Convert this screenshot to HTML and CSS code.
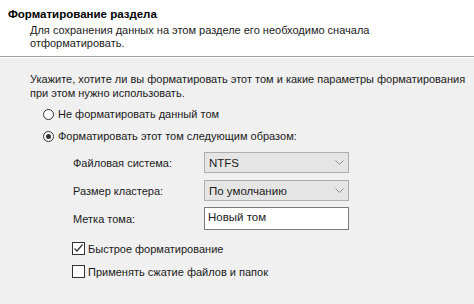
FILE: index.html
```html
<!DOCTYPE html>
<html lang="ru">
<head>
  <meta charset="UTF-8" />
  <title>Форматирование раздела</title>
  <link rel="stylesheet" href="styles.css">
</head>
<body>
  <div class="header">
    <div class="header-title">Форматирование раздела</div>
    <div class="header-desc">Для сохранения данных на этом разделе его необходимо сначала<br>отформатировать.</div>
  </div>

  <div class="content">
    <p class="intro">Укажите, хотите ли вы форматировать этот том и какие параметры форматирования<br>при этом нужно использовать.</p>

    <div class="radio-row">
      <span class="radio"></span>
      <span>Не форматировать данный том</span>
    </div>
    <div class="radio-row">
      <span class="radio checked"></span>
      <span>Форматировать этот том следующим образом:</span>
    </div>

    <div class="options">
      <div class="field">
        <span class="field-label">Файловая система:</span>
        <div class="combo">
          <span>NTFS</span>
          <svg class="chevron" width="9" height="5" viewBox="0 0 9 5"><path d="M0.5 0.5 L4.5 4.5 L8.5 0.5" fill="none" stroke="#8a8a8a" stroke-width="1"/></svg>
        </div>
      </div>
      <div class="field">
        <span class="field-label">Размер кластера:</span>
        <div class="combo">
          <span>По умолчанию</span>
          <svg class="chevron" width="9" height="5" viewBox="0 0 9 5"><path d="M0.5 0.5 L4.5 4.5 L8.5 0.5" fill="none" stroke="#8a8a8a" stroke-width="1"/></svg>
        </div>
      </div>
      <div class="field field-text">
        <span class="field-label">Метка тома:</span>
        <div class="textbox">Новый том</div>
      </div>

      <div class="check-row first">
        <span class="check">
          <svg width="11" height="11" viewBox="0 0 11 11"><path d="M1.5 5.5 L4 8 L9.5 1.5" fill="none" stroke="#333" stroke-width="1.2"/></svg>
        </span>
        <span>Быстрое форматирование</span>
      </div>
      <div class="check-row">
        <span class="check"></span>
        <span>Применять сжатие файлов и папок</span>
      </div>
    </div>
  </div>
</body>
</html>
```

FILE: styles.css
```css
body {
  margin: 0;
  width: 474px;
  height: 304px;
  overflow: hidden;
  background: #f0f0f0;
  font-family: "Liberation Sans", Arial, sans-serif;
  font-size: 11px;
  color: #1a1a1a;
}

.header {
  background: #fff;
  height: 57px;
  box-sizing: border-box;
  padding: 7px 0 0 8px;
  border-bottom: 1px solid #a0a0a0;
}

.header-title {
  font-weight: bold;
  font-size: 11.5px;
  line-height: 14px;
  color: #000;
}

.header-desc {
  padding-left: 22px;
  margin-top: 3px;
  line-height: 13px;
}

.content {
  border-top: 1px solid #fff;
  padding: 14px 0 0 30px;
}

.intro {
  margin: 0;
  line-height: 14px;
}

.radio-row {
  display: flex;
  align-items: center;
  gap: 4px;
  height: 22px;
  padding-left: 13px;
}

.radio-row:first-of-type {
  margin-top: 3px;
}

.radio {
  width: 11px;
  height: 11px;
  border: 1px solid #333;
  border-radius: 50%;
  background: #fff;
  box-sizing: border-box;
  display: flex;
  align-items: center;
  justify-content: center;
}

.radio.checked::after {
  content: "";
  width: 5px;
  height: 5px;
  border-radius: 50%;
  background: #333;
}

.options {
  padding-left: 43px;
  margin-top: 5px;
}

.field {
  display: flex;
  align-items: center;
  margin-bottom: 7px;
}

.field-label {
  width: 131px;
}

.combo {
  width: 145px;
  height: 21px;
  box-sizing: border-box;
  border: 1px solid #adadad;
  background: #e5e5e5;
  display: flex;
  align-items: center;
  justify-content: space-between;
  padding: 0 4px 0 4px;
  font-size: 11.5px;
}

.field-text {
  margin-top: -1px;
}

.textbox {
  width: 145px;
  height: 23px;
  box-sizing: border-box;
  border: 1px solid #7a7a7a;
  background: #fff;
  padding: 3px 3px 0;
  font-size: 11.5px;
}

.check-row {
  display: flex;
  align-items: center;
  gap: 3px;
  height: 23px;
  margin-left: -1px;
}

.check-row.first {
  margin-top: 5px;
}

.check {
  width: 13px;
  height: 13px;
  box-sizing: border-box;
  border: 1px solid #333;
  background: #fff;
  display: flex;
  align-items: center;
  justify-content: center;
}
```
